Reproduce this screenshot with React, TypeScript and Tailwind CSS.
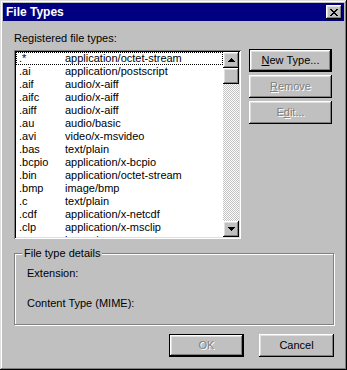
import type { ReactNode } from 'react';

const raised =
  'shadow-[inset_-1px_-1px_0_#000,inset_1px_1px_0_#fff,inset_-2px_-2px_0_#808080,inset_2px_2px_0_#dfdfdf]';
const sunken =
  'shadow-[inset_1px_1px_0_#808080,inset_-1px_-1px_0_#fff,inset_2px_2px_0_#000,inset_-2px_-2px_0_#dfdfdf]';

const fileTypes: [string, string][] = [
  ['.*', 'application/octet-stream'],
  ['.ai', 'application/postscript'],
  ['.aif', 'audio/x-aiff'],
  ['.aifc', 'audio/x-aiff'],
  ['.aiff', 'audio/x-aiff'],
  ['.au', 'audio/basic'],
  ['.avi', 'video/x-msvideo'],
  ['.bas', 'text/plain'],
  ['.bcpio', 'application/x-bcpio'],
  ['.bin', 'application/octet-stream'],
  ['.bmp', 'image/bmp'],
  ['.c', 'text/plain'],
  ['.cdf', 'application/x-netcdf'],
  ['.clp', 'application/x-msclip'],
  ['.cmx', 'image/x-cmx'],
];

// pixel rows as [x, width] runs
function Pixels({ w, h, runs, className }: { w: number; h: number; runs: [number, number][][]; className?: string }) {
  return (
    <svg width={w} height={h} viewBox={`0 0 ${w} ${h}`} shapeRendering="crispEdges" className={className}>
      {runs.map((row, y) =>
        row.map(([x, len], j) => <rect key={`${y}-${j}`} x={x} y={y} width={len} height="1" fill="#000" />),
      )}
    </svg>
  );
}

const arrowRuns: [number, number][][] = [[[3, 1]], [[2, 3]], [[1, 5]], [[0, 7]]];

const closeRuns: [number, number][][] = [
  [[0, 2], [6, 2]],
  [[1, 2], [5, 2]],
  [[2, 4]],
  [[3, 2]],
  [[2, 4]],
  [[1, 2], [5, 2]],
  [[0, 2], [6, 2]],
];

function Button({
  children,
  width,
  isDefault,
  disabled,
}: {
  children: ReactNode;
  width: string;
  isDefault?: boolean;
  disabled?: boolean;
}) {
  const label = (
    <span className={disabled ? 'text-[#808080] [text-shadow:1px_1px_0_#fff]' : 'text-black'}>{children}</span>
  );
  if (isDefault) {
    return (
      <div className={`${width} h-[23px] border border-black`}>
        <div className={`flex h-full w-full items-center justify-center ${raised}`}>{label}</div>
      </div>
    );
  }
  return <div className={`${width} flex h-[23px] items-center justify-center ${raised}`}>{label}</div>;
}

export default function App() {
  return (
    <div
      className={`h-[370px] w-[347px] bg-[#c0c0c0] p-[3px] text-[11px] leading-[13px] text-black [font-family:'Liberation_Sans',Arial,sans-serif] shadow-[inset_-1px_-1px_0_#000,inset_1px_1px_0_#dfdfdf,inset_-2px_-2px_0_#808080,inset_2px_2px_0_#fff]`}
    >
      {/* Title bar */}
      <div className="flex h-[18px] items-center bg-[#000080] pl-[3px] pr-[2px]">
        <span className="text-[12px] font-bold text-white">File Types</span>
        <div className={`ml-auto flex h-[14px] w-[16px] items-center justify-center bg-[#c0c0c0] ${raised}`}>
          <Pixels w={8} h={7} runs={closeRuns} />
        </div>
      </div>

      <div className="px-[11px] pt-[11px]">
        <div className="flex">
          {/* Registered list */}
          <div className="w-[227px]">
            <div className="h-[13px]">Registered file types:</div>
            <div className={`mt-[5px] flex h-[189px] bg-white p-[2px] ${sunken}`}>
              <div className="flex-1 overflow-hidden">
                {fileTypes.map(([ext, mime], i) => (
                  <div
                    key={ext}
                    className={`flex h-[13px] whitespace-nowrap ${i === 0 ? 'border border-dotted border-black' : ''}`}
                  >
                    <div className={i === 0 ? 'w-[48px] pl-[2px] leading-[11px]' : 'w-[49px] pl-[3px]'}>{ext}</div>
                    <div className={i === 0 ? 'leading-[11px]' : ''}>{mime}</div>
                  </div>
                ))}
              </div>
              {/* Scrollbar */}
              <div className="flex w-[16px] flex-col">
                <div className={`flex h-[16px] items-center justify-center bg-[#c0c0c0] ${raised}`}>
                  <Pixels w={7} h={4} runs={arrowRuns} />
                </div>
                <div className={`h-[16px] bg-[#c0c0c0] ${raised}`} />
                <div className="flex-1 bg-[repeating-conic-gradient(#c0c0c0_0%_25%,#fff_0%_50%)] bg-[length:2px_2px]" />
                <div className={`flex h-[16px] items-center justify-center bg-[#c0c0c0] ${raised}`}>
                  <Pixels w={7} h={4} runs={arrowRuns} className="rotate-180" />
                </div>
              </div>
            </div>
          </div>

          {/* Side buttons */}
          <div className="ml-[8px] flex flex-col gap-[3px] pt-[17px]">
            <Button width="w-[83px]" isDefault>
              <span className="underline">N</span>ew Type...
            </Button>
            <Button width="w-[83px]" disabled>
              <span className="underline">R</span>emove
            </Button>
            <Button width="w-[83px]" disabled>
              E<span className="underline">d</span>it...
            </Button>
          </div>
        </div>

        {/* Details group */}
        <div className="relative mt-[14px] h-[72px] w-[320px] border border-[#808080] pl-[12px] pt-[13px] shadow-[1px_1px_0_#fff,inset_1px_1px_0_#fff]">
          <span className="absolute -top-[7px] left-[7px] bg-[#c0c0c0] px-[2px]">File type details</span>
          <div>Extension:</div>
          <div className="mt-[17px]">Content Type (MIME):</div>
        </div>

        {/* Dialog buttons */}
        <div className="mt-[9px] flex w-[320px] justify-end gap-[15px]">
          <Button width="w-[75px]" isDefault disabled>
            OK
          </Button>
          <Button width="w-[75px]">Cancel</Button>
        </div>
      </div>
    </div>
  );
}
